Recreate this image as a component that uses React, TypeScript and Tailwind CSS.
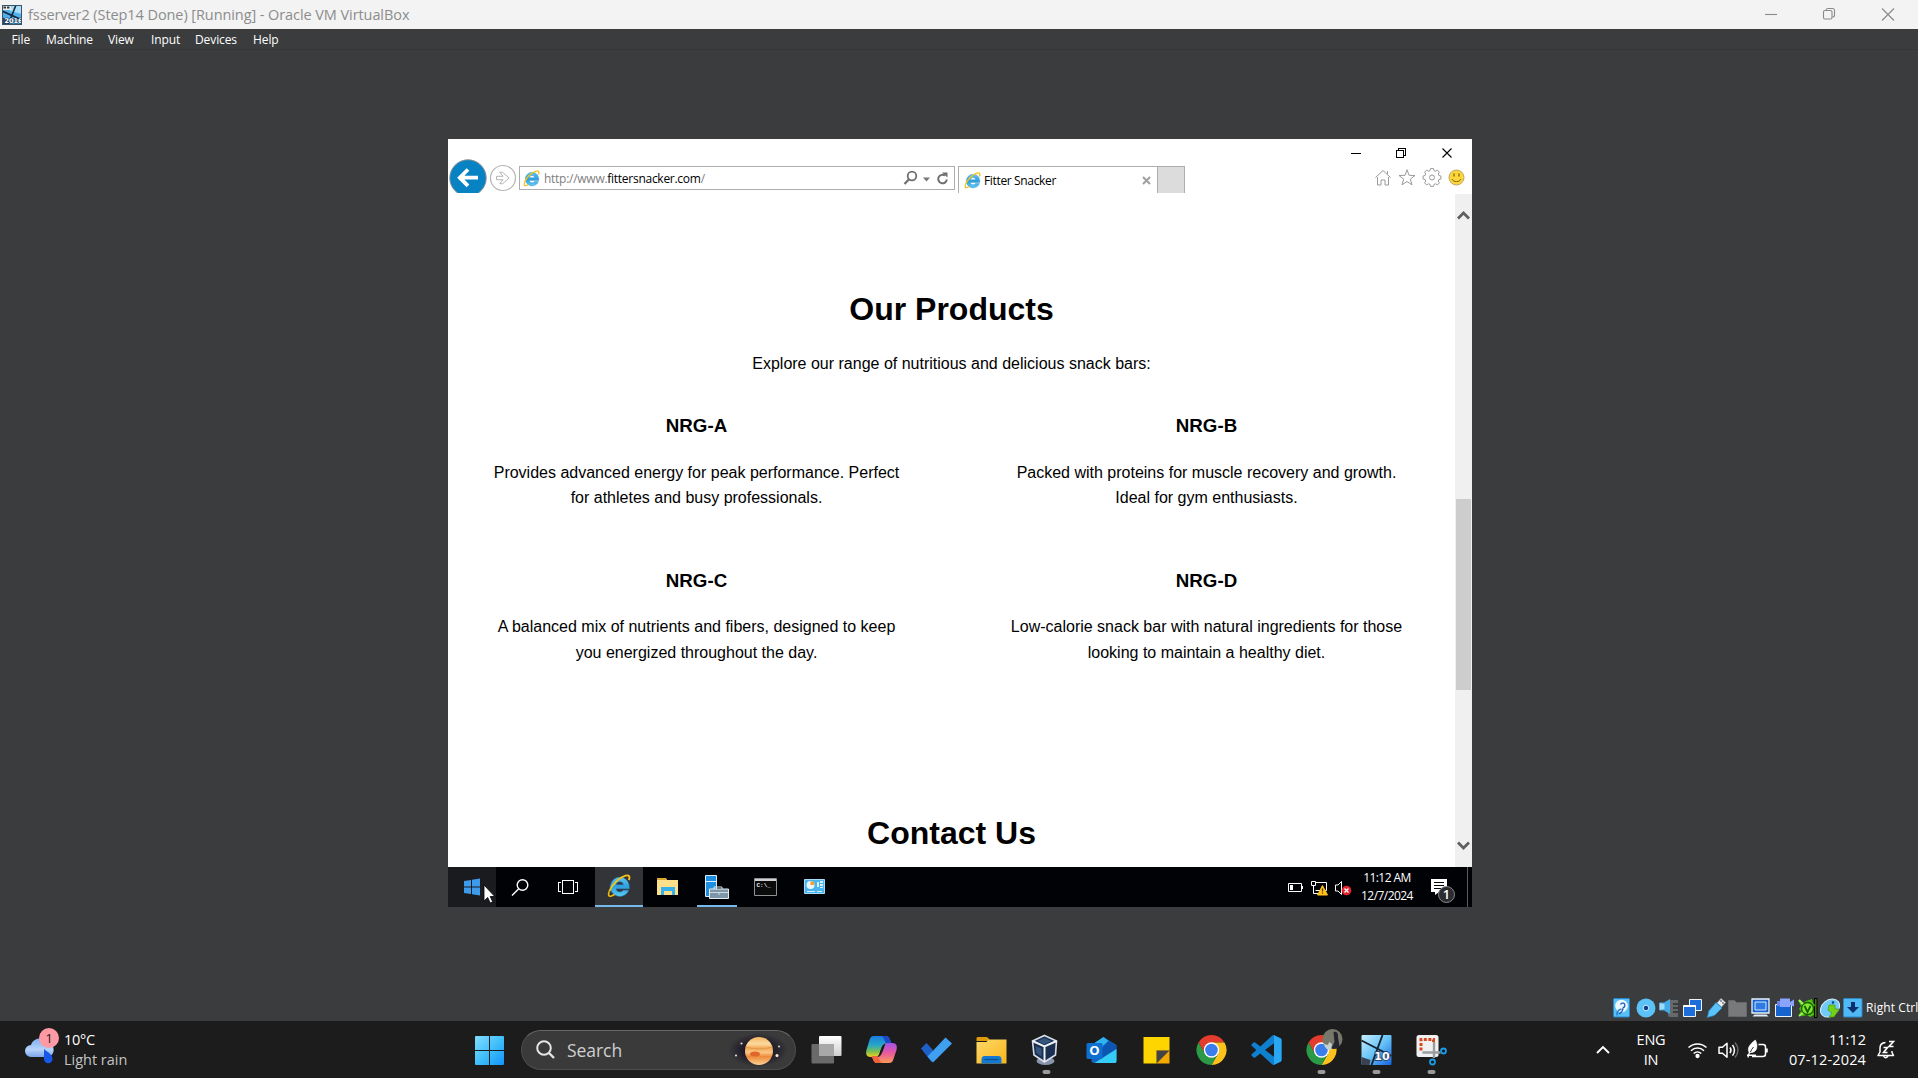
import React from "react";

const UI = "font-['Open_Sans','Noto_Sans',sans-serif]";

function IeLogo({ size }: { size: number }) {
  return (
    <svg width={size} height={size} viewBox="0 0 24 24" fill="none" className="shrink-0">
      <defs>
        <linearGradient id="ieBlue" x1="0" y1="0" x2="0" y2="1">
          <stop offset="0" stopColor="#5fc4f0" />
          <stop offset="0.5" stopColor="#2f9fe0" />
          <stop offset="1" stopColor="#5ccbf5" />
        </linearGradient>
      </defs>
      <path
        d="M12.8 3.2a9.600 9.600 0 1 0 9 13h-5.600c-.8 1.200-1.900 1.700-3.300 1.700-2.200 0-3.700-1.200-3.900-3.200h13.300c.6-6.300-3.200-11.500-9.500-11.500zM9 10.800c.4-1.900 1.800-3 3.800-3s3.400 1.100 3.600 3z"
        fill="url(#ieBlue)"
        stroke="#2583c4"
        strokeWidth="0.5"
        fillRule="evenodd"
      />
      <path d="M2.200 17.500C4.500 11 12 3.500 18.500 1.600c3.800-1 4.700 1 3.300 4.600" stroke="#f5c21a" strokeWidth="1.900" />
      <path d="M2.200 17.500C.8 21 1.600 23 4.400 22c1-.4 2.200-1 3.200-1.700" stroke="#f0b90c" strokeWidth="1.600" />
    </svg>
  );
}

function BrowserChrome() {
  return (
    <div className={`flex h-[54px] w-full bg-white ${UI}`}>
      <div className="mt-[20px] flex h-[34px] w-[507px] shrink-0 overflow-hidden">
        <svg width="71" height="34" viewBox="0 0 71 34" fill="none" className="shrink-0">
          <circle cx="20" cy="19" r="18.200" fill="#0783c4" stroke="#8a8f93" strokeWidth="1" />
          <path d="M30 18.700H12M20 10.500l-8.200 8.200 8.200 8.200" stroke="#fff" strokeWidth="3.800" />
          <circle cx="55" cy="19" r="12.500" stroke="#b4b4b4" strokeWidth="1.200" />
          <path d="M48.500 17.300h6.500l-3.200-4h2.800l6.500 5.700-6.500 5.700h-2.800l3.200-4h-6.500z" stroke="#b4b4b4" />
        </svg>
        <div className="mt-[7px] flex h-[24px] w-[436px] shrink-0 items-center border border-[#adadad] pl-[3px]">
          <IeLogo size={17} />
          <span className="mt-[2px] ml-[4px] w-[359px] shrink-0 text-[12px] leading-none tracking-[-0.27px] whitespace-nowrap text-[#808080]">
            http://www.<span className="text-black">fittersnacker.com</span>/
          </span>
          <svg width="48" height="22" viewBox="0 0 48 22" fill="none" className="shrink-0">
            <circle cx="9" cy="9" r="4.300" stroke="#6f6f6f" strokeWidth="1.800" />
            <path d="M6 12.300 1.500 17" stroke="#6f6f6f" strokeWidth="2.200" />
            <path d="M20 10.500h7l-3.500 4z" fill="#777" />
            <path d="M42 8.500A4.300 4.300 0 1 0 43.800 12.500" stroke="#6f6f6f" strokeWidth="2" />
            <path d="M39 5.500h5.500v5z" fill="#6f6f6f" />
          </svg>
        </div>
      </div>
      <div className="mt-[27px] ml-[3px] flex h-[27px] w-[200px] shrink-0 items-center border border-b-0 border-[#adadad] bg-white pl-[5px]">
        <IeLogo size={17} />
        <span className="mt-[2px] ml-[3px] w-[158px] shrink-0 text-[12px] leading-none tracking-[-0.35px] whitespace-nowrap text-black">Fitter Snacker</span>
        <svg width="9" height="9" viewBox="0 0 9 9" className="shrink-0">
          <path d="M1 1l7 7M8 1L1 8" stroke="#a0a0a0" strokeWidth="2" />
        </svg>
      </div>
      <div className="mt-[27px] h-[27px] w-[27px] shrink-0 border-t border-r border-[#adadad] bg-[#dcdcdc]" />
      <div className="ml-auto flex w-[130px] flex-col">
        <svg width="130" height="27" viewBox="0 0 130 27" fill="none" stroke="#000" shapeRendering="crispEdges">
          <path d="M9 14.500h10" />
          <path d="M54.500 11.500h7v7h-7zM56.500 11v-1.500h7v7h-2" />
          <path d="M100.500 9.500l9 9M109.500 9.500l-9 9" shapeRendering="auto" strokeWidth="1.100" />
        </svg>
        <svg width="130" height="27" viewBox="0 0 130 27" fill="none" stroke="#9a9a9a">
          <path d="M33.500 11.500 41 4.500l7.500 7M35.500 11v8h3.500v-5h4v5h3.500v-8M45.500 5v3" />
          <path d="M65 3.700l2 5.600 6 .2-4.700 3.600 1.700 5.700-5-3.300-5 3.300 1.700-5.700L57 9.500l6-.2z" />
          <path d="M91.500 3h3l.5 2 1.500.6 1.900-1.100 2 2-1.100 1.900.6 1.500 2 .5v3l-2 .5-.6 1.500 1.100 1.900-2 2-1.900-1.100-1.500.6-.5 2h-3l-.5-2-1.500-.6-1.900 1.100-2-2 1.100-1.900-.6-1.500-2-.5v-3l2-.5.6-1.500-1.100-1.900 2-2 1.900 1.100 1.500-.6z" transform="translate(-3 -.4)" />
          <circle cx="90" cy="11.500" r="2.500" />
          <circle cx="114.500" cy="11.500" r="7.500" fill="#ffd63a" stroke="#b9a468" />
          <path d="M112 7.500v3M117 7.500v3" stroke="#7a6414" strokeWidth="1.300" />
          <path d="M110 13c1.500 3.500 7.500 3.500 9 0" stroke="#7a6414" />
        </svg>
      </div>
    </div>
  );
}

function Product({ name, lines }: { name: string; lines: [string, string] }) {
  return (
    <article className="h-[154.6px] text-center whitespace-nowrap">
      <h3 className="text-[18.72px] leading-[30px] font-bold">{name}</h3>
      <p className="mt-[18.5px] text-[16px] leading-[25.6px]">
        {lines[0]}
        <br />
        {lines[1]}
      </p>
    </article>
  );
}

function WebPage() {
  return (
    <div className="flex h-[674px] w-full bg-white">
      <main className="flex w-[1007px] flex-col items-center overflow-hidden font-['Liberation_Sans',Arial,sans-serif] text-black">
        <h1 className="mt-[91px] text-[32px] leading-[51px] font-bold">Our Products</h1>
        <p className="mt-[16px] text-[16px] leading-[26px]">Explore our range of nutritious and delicious snack bars:</p>
        <section className="mt-[34px] grid grid-cols-[450px_450px] gap-x-[60px]">
          <Product name="NRG-A" lines={["Provides advanced energy for peak performance. Perfect", "for athletes and busy professionals."]} />
          <Product name="NRG-B" lines={["Packed with proteins for muscle recovery and growth.", "Ideal for gym enthusiasts."]} />
          <Product name="NRG-C" lines={["A balanced mix of nutrients and fibers, designed to keep", "you energized throughout the day."]} />
          <Product name="NRG-D" lines={["Low-calorie snack bar with natural ingredients for those", "looking to maintain a healthy diet."]} />
        </section>
        <h1 className="mt-[88px] text-[32px] leading-[51px] font-bold">Contact Us</h1>
      </main>
      <div className="mt-px flex w-[17px] flex-col items-center bg-[#f0f0f0]">
        <svg width="17" height="305" viewBox="0 0 17 305" fill="none" className="shrink-0">
          <path d="M3 24.500 8.500 19l5.500 5.500" stroke="#606060" strokeWidth="2.800" />
        </svg>
        <div className="h-[191px] w-[15px] shrink-0 bg-[#cdcdcd]" />
        <svg width="17" height="177" viewBox="0 0 17 177" fill="none" className="shrink-0">
          <path d="M3 152.500 8.500 158l5.500-5.500" stroke="#606060" strokeWidth="2.800" />
        </svg>
      </div>
    </div>
  );
}

function GuestTaskbar() {
  return (
    <div className={`flex h-[40px] w-full bg-[#010206] text-white ${UI}`}>
      <div className="relative h-[40px] w-[48px] bg-[#1a1b1f]">
        <svg width="48" height="40" viewBox="0 0 48 40" className="relative z-10 overflow-visible">
          <path d="M16 14l7-1v6.500h-7zM24 12.800l8-1.200v7.900h-8zM16 20.500h7V27l-7-1zM24 20.500h8v7.900l-8-1.200z" fill="#3d9be9" />
          <path d="M36 18v16l3.700-3.500 2.500 5.500 2.500-1.200-2.500-5.300h4.600z" fill="#fff" stroke="#000" strokeWidth=".8" />
        </svg>
      </div>
      <svg width="48" height="40" viewBox="0 0 48 40" fill="none" stroke="#fff" strokeWidth="1.400">
        <circle cx="26.500" cy="18" r="5.300" />
        <path d="M22.500 22 16 28.500" />
      </svg>
      <svg width="48" height="40" viewBox="0 0 48 40" fill="none" stroke="#fff" shapeRendering="crispEdges">
        <path d="M18.500 13.500h11v13h-11zM17 15.500h-2.500v9H17M31 15.500h2.500v9H31" />
      </svg>
      <div className="ml-[3px] flex h-[40px] w-[48px] items-start justify-center border-b-2 border-[#76b9ed] bg-[#333437] pt-[7px]">
        <IeLogo size={24} />
      </div>
      <svg width="49" height="40" viewBox="0 0 49 40">
        <path d="M14 11h9l1 2h11v15H14z" fill="#ffe08a" />
        <path d="M14 11h9v2h-9z" fill="#d9a82c" />
        <path d="M18 28v-8h14v8h-3v-4h-8v4z" fill="#35b0ea" />
      </svg>
      <div className="ml-[5px] flex h-[40px] w-[40px] items-start justify-center border-b-2 border-[#76b9ed] pt-[8px]">
        <svg width="24" height="24" viewBox="0 0 24 24">
          <path d="M.5.500h11v21H.5z" fill="#1e8fe0" stroke="#d8ecfa" />
          <path d="M1 6.500h10" stroke="#d8ecfa" />
          <path d="M9 14V12h8v2" fill="none" stroke="#dfe6ea" />
          <path d="M4.500 14h19v9.500h-19z" fill="#7d96a8" stroke="#e6ecf0" />
          <path d="M5 17.500h18M14 17v3" stroke="#cfdbe3" />
        </svg>
      </div>
      <svg width="49" height="40" viewBox="0 0 49 40" className="ml-[4px]">
        <path d="M13.500 11.500h22v17h-22z" fill="#0b0b0b" stroke="#8e9296" />
        <path d="M14 12h21v2H14z" fill="#cfd2d4" />
        <text x="15.500" y="20" fontSize="6" fontWeight="bold" fill="#e8e8e8" fontFamily="Liberation Mono">C:\_</text>
      </svg>
      <svg width="49" height="40" viewBox="0 0 49 40">
        <path d="M14.500 12.500h20v14h-20z" fill="#49b4ee" stroke="#a5dcf9" />
        <circle cx="20.500" cy="18" r="4" fill="#e9f6fd" />
        <path d="M20.500 18v-4a4 4 0 0 1 4 4z" fill="#f0a030" />
        <path d="M27 15h2v5h-2zM30 14h3v2h-3zM30 17h3v2h-3zM30 20h3v1h-3z" fill="#d7effc" />
        <path d="M17 24.500h8M27 24.500h5" stroke="#d7effc" />
      </svg>
      <div className="ml-auto flex h-[40px] items-center">
        <svg width="66" height="40" viewBox="0 0 66 40" fill="none" stroke="#fff">
          <path d="M.5 16.500h13v8H.5zM14.500 19v3" strokeWidth="1" />
          <path d="M2 18h3v5H2z" fill="#fff" stroke="none" />
          <path d="M28 15.500h10.500v8H27.500M23.500 14.500h4v4h-4zM25.500 18.500v8h5M31 26.500h4" />
          <path d="M34.500 18.500 39.500 28h-10z" fill="#ffc219" stroke="#ffc219" />
          <path d="M34.500 21.500v3M34.500 25.500v1.200" stroke="#5a3c00" strokeWidth="1.300" />
          <path d="M47.500 18v6h2.500l3.500 3.500v-13L50 18z" />
          <circle cx="58.500" cy="23.500" r="4.800" fill="#e2232e" stroke="none" />
          <path d="M56.500 21.500l4 4M60.500 21.500l-4 4" strokeWidth="1.300" />
        </svg>
        <div className="mr-[16px] ml-[5px] w-[56px] text-center text-[12px] leading-[18px] tracking-[-0.55px] whitespace-nowrap">
          <div>11:12 AM</div>
          <div>12/7/2024</div>
        </div>
        <svg width="26" height="40" viewBox="0 0 26 40">
          <path d="M0 12h16v13H8l-4 3v-3H0z" fill="#fff" />
          <path d="M3 15.500h10M3 18.500h10M3 21.500h7" stroke="#010206" strokeWidth="1.200" />
          <circle cx="15.500" cy="27.500" r="8" fill="#2b2c30" stroke="#85878b" />
          <text x="15.500" y="32" fontSize="13" textAnchor="middle" fill="#fff" fontFamily="Open Sans" fontWeight="600">1</text>
        </svg>
        <div className="mr-[4px] ml-[10px] h-[40px] w-px bg-[#5b5c5f]" />
      </div>
    </div>
  );
}

function StatusIcons() {
  const cell = "h-[20px] w-[23px] shrink-0 overflow-visible";
  return (
    <div className="flex h-[20px] items-center">
      <svg className={cell} viewBox="0 0 23 20">
        <rect x="1.500" y="0.500" width="16" height="18.500" rx="1" fill="#56c0f7" stroke="#2b86c8" />
        <circle cx="9.500" cy="8" r="6.300" fill="#eaf7ff" />
        <path d="M5 17.500c-.5-3.500 1-5.500 4.500-6.500" fill="none" stroke="#2a7fc8" strokeWidth="1.500" />
        <path d="M8.500 6.500a2.300 2.300 0 1 1 2.200 3.200M11 10c0 2-1.500 4.500-4 6" fill="none" stroke="#1b5bb5" strokeWidth="1.300" />
      </svg>
      <svg className={cell} viewBox="0 0 23 20">
        <circle cx="11" cy="10" r="9.500" fill="#5cc3f8" />
        <circle cx="11" cy="10" r="2.800" fill="#123f8c" stroke="#c9edff" />
      </svg>
      <svg className={cell} viewBox="0 0 23 20">
        <path d="M10 3q0-1 1-1h9v3h-5v2h5v2h-5v2h5v2h-5v2h5v4h-8q-2 0-2-2z" fill="#66696c" />
        <path d="M1.500 4.500h4.500l6-3.500v15l-6-3.500H1.500z" fill="#45a9e8" />
        <path d="M1.500 5l5 1v5l-5 1z" fill="#9cdcfb" />
      </svg>
      <svg className={cell} viewBox="0 0 23 20">
        <path d="M8.500 1.500h12v11h-12z" fill="#1c6edb" stroke="#eaf4fd" />
        <path d="M2.500 7.500h12v11h-12z" fill="#1c6edb" stroke="#eaf4fd" />
        <path d="M2.500 8h12" stroke="#fff" strokeWidth="2" />
      </svg>
      <svg className={cell} viewBox="0 0 23 20">
        <path d="M13 5l4-4.500 4.500 4L17.500 9z" fill="#e9eef2" stroke="#9ba6ad" strokeWidth=".7" />
        <path d="M16.500 2.500l1 1M18.500 4.500l1 1" stroke="#333" strokeWidth="1.200" />
        <path d="M12 4.500l6 5.500-7 7c-2 1.500-4 1-6 2l-2 .5 1-3c.5-2 0-3 2-5z" fill="#5cc3f8" stroke="#1e7fc4" strokeWidth=".7" />
      </svg>
      <svg className={cell} viewBox="0 0 23 20">
        <path d="M1.500 2.500h6l2 2h10v14h-18z" fill="#77797b" stroke="#66686a" />
      </svg>
      <svg className={cell} viewBox="0 0 23 20">
        <path d="M2 1h17v14H2z" fill="#1763cf" stroke="#eaf4fd" strokeWidth="1.300" />
        <path d="M5 4h11v8H5z" fill="#2e7be6" stroke="#d6eafc" />
        <path d="M4.500 16.500h12l2 2h-16z" fill="#dceefb" />
      </svg>
      <svg className={cell} viewBox="0 0 23 20">
        <path d="M2.500 6.500h16v12h-16z" fill="#1763cf" stroke="#eaf4fd" />
        <path d="M7 .5h10v8.500H7zM17 4l4-2.500v7L17 7z" fill="#8aa4ff" />
        <path d="M4 3h3v5H4z" fill="#6b86e8" />
      </svg>
      <svg className={cell} viewBox="0 0 23 20">
        <path d="M18.500 .5h2.500v19h-2.500z" fill="#3c7a10" stroke="#000" />
        <path d="M2 2l5 3 3-2 6-2 1 4 2 2-2 4 1 6-4 2-3-2-4 1-4-1 2-4-2-2 2-3z" fill="#4cc40c" />
        <circle cx="11.500" cy="10.500" r="6" fill="#7aea2a" stroke="#1c5a05" strokeWidth="1.400" />
        <path d="M8.500 8l3 6 3-6" fill="none" stroke="#1c5a05" strokeWidth="1.800" />
        <path d="M3 2l4 4M3 18l4-3" stroke="#9cf55a" strokeWidth="2" />
      </svg>
      <svg className={cell} viewBox="0 0 23 20">
        <ellipse cx="11" cy="10" rx="10.500" ry="8" fill="#6fcaf8" stroke="#d3effd" transform="rotate(-40 11 10)" />
        <circle cx="14" cy="4.500" r="1.300" fill="#103a80" />
        <path d="M10 7h6v4h4l-5 8h-5l3-4-4-3z" fill="#72d316" stroke="#3f8a08" strokeWidth=".6" />
      </svg>
      <svg className={cell} viewBox="0 0 23 20">
        <rect x="1.500" y="0.500" width="18.500" height="18.500" rx="1" fill="#4fb9f5" stroke="#2e86c5" />
        <path d="M9 4h4v5h4l-6 6-6-6h4z" fill="#0b2e6e" />
      </svg>
      <span className={`ml-px text-[12px] leading-none tracking-[0.1px] whitespace-nowrap text-white ${UI}`}>Right Ctrl</span>
    </div>
  );
}

function Slot({ children, running }: { children: React.ReactNode; running?: boolean }) {
  return (
    <svg width="55" height="57" viewBox="-27.5 -29 55 57" className="shrink-0">
      {children}
      {running && <rect x="-4" y="20" width="8" height="4" rx="2" fill="#9a9a9a" />}
    </svg>
  );
}

function ChromeMark() {
  return (
    <g>
      <path d="M-13-7.500A15 15 0 0 1 13-7.500H0L-6.500 3.750z" fill="#e33b2e" />
      <path d="M13-7.500A15 15 0 0 1 0 15L6.500 3.750 0-7.500z" fill="#fcc21b" />
      <path d="M0 15A15 15 0 0 1-13-7.500L-6.500 3.750 0 7.500 6.500 3.750z" fill="#2b9a46" />
      <circle r="7.700" fill="#fff" />
      <circle r="6.300" fill="#3b7ded" />
    </g>
  );
}

function HostApps() {
  return (
    <div className="ml-[3px] flex">
      <Slot>
        <defs>
          <linearGradient id="tv" x1="0" y1="0" x2="0" y2="1"><stop offset="0" stopColor="#fff" /><stop offset="1" stopColor="#cfcfcf" /></linearGradient>
          <linearGradient id="cpA" x1="0" y1="0" x2="0" y2="1"><stop offset="0" stopColor="#1b7be0" /><stop offset=".45" stopColor="#28a9c4" /><stop offset=".75" stopColor="#7fc04a" /><stop offset="1" stopColor="#f3d020" /></linearGradient>
          <linearGradient id="cpB" x1="0" y1="0" x2="0" y2="1"><stop offset="0" stopColor="#a352e8" /><stop offset=".5" stopColor="#ea5a9c" /><stop offset="1" stopColor="#fb9a5a" /></linearGradient>
          <linearGradient id="fold" x1="0" y1="0" x2="1" y2="1"><stop offset="0" stopColor="#ffd968" /><stop offset="1" stopColor="#f7b51c" /></linearGradient>
          <linearGradient id="w10" x1="0" y1="0" x2="1" y2="1"><stop offset="0" stopColor="#c9efff" /><stop offset=".5" stopColor="#66c3f7" /><stop offset="1" stopColor="#1763e0" /></linearGradient>
        </defs>
        <rect x="-7.500" y="-14" width="22.500" height="20" rx="1" fill="url(#tv)" />
        <rect x="-15" y="-6" width="22.500" height="19.500" rx="1" fill="#6a6a6a" />
        <path d="M-7.500-6H7.500V6h-15z" fill="#a8a8a8" />
      </Slot>
      <Slot>
        <path d="M-7-14H4c3 0 4 2 5 5l1 3H5c-3 0-4 1-5 4l-2 6c-1 2-2 3-4 3h-5c-4 0-5-3-4-7l3-10c1-3 2-4 4-4z" fill="url(#cpA)" />
        <path d="M-1-14h5c3 0 4 2 5 5l1 3H5c-2-1-2-8-6-8z" fill="#1d48c8" />
        <path d="M7 13H-4c-3 0-4-2-5-5l-1-1h5c3 0 4-1 5-4l2-6c1-2 2-4 4-4h5c4 0 5 3 4 7l-3 9c-1 3-2 4-5 4z" fill="url(#cpB)" />
        <path d="M1 13h-5c-3 0-4-2-5-5l-1-2h5c2 0 3 6 6 7z" fill="#f0643c" />
        <path d="M-3.500 6.500C-1.500 5-.5-6 4-6.500 2.500-4 1.500 5.500-3.500 6.500z" fill="#1c1c1c" />
      </Slot>
      <Slot>
        <path d="M-15.500-1.500-10-7l6 6.500 1 10.500L-5 12z" fill="#1f5fc8" />
        <path d="M-9 6.500 9-12.500l6.500 6L-3.500 12.500z" fill="#3f9ff0" />
      </Slot>
      <Slot>
        <path d="M-15-11.500c0-1 .5-1.500 1.500-1.500h8c1 0 2 .5 3 2l1 2h-13.500z" fill="#dc9a0c" />
        <path d="M-15-8h10l2-2.500h18V13.500h-30z" fill="url(#fold)" />
        <path d="M-10 13.500v-4c0-2 1-3.500 3-3.500H7c2 0 3 1.500 3 3.500v4z" fill="#1578d0" />
        <path d="M-7 9.500H7" stroke="#0c4f93" strokeWidth="1.300" />
      </Slot>
      <Slot running>
        <ellipse cx="-1" cy="11" rx="9" ry="4" fill="#8794ac" />
        <path d="M-2-14.500 10-9 9 5-2 12-12.500 5-14-9z" fill="#1b3050" stroke="#d8dee8" strokeWidth="1.600" />
        <path d="M-14-9-2-3.500 10-9M-2-3.500V12" fill="none" stroke="#eef2f7" strokeWidth="2" />
        <path d="M-2-12 5-9l-7 3.500L-9-9z" fill="#33547c" />
        <path d="M-11-4l6 2.500v8L-10 3z" fill="#35557f" />
      </Slot>
      <Slot>
        <path d="M-10-5 2-13 15-5v16c0 1.500-1 2-2 2H-7c-2 0-3-1-3-2z" fill="#1566c2" />
        <path d="M-10-5 2-13l5 4L-7 3z" fill="#2fb2ee" />
        <path d="M7-9l8 5v5L2 8l-6-4z" fill="#0c55b0" />
        <path d="M15-1v12c0 1.500-1 2-2 2H-7z" fill="#35cdf8" />
        <rect x="-15" y="-7" width="16" height="16" rx="1.500" fill="#0f6fd0" />
        <text x="-7" y="5" fontSize="13" fontWeight="bold" textAnchor="middle" fill="#fff" fontFamily="Open Sans">O</text>
      </Slot>
      <Slot>
        <path d="M-13-13h26V0L0 13.500h-13z" fill="#ffd500" />
        <path d="M0 0h13v13.500H0z" fill="#f4a900" />
        <path d="M0 .5h13L0 13.500z" fill="#444" />
      </Slot>
      <Slot><ChromeMark /></Slot>
      <Slot>
        <g transform="translate(-15 -15) scale(1.25)">
          <path d="M23.150 2.587L18.210.210a1.494 1.494 0 0 0-1.705.290l-9.460 8.630-4.120-3.128a.999.999 0 0 0-1.276.057L.327 7.261A1 1 0 0 0 .326 8.740L3.899 12 .326 15.260a1 1 0 0 0 .001 1.479L1.650 17.940a.999.999 0 0 0 1.276.057l4.120-3.128 9.460 8.630a1.492 1.492 0 0 0 1.704.290l4.942-2.377A1.500 1.500 0 0 0 24 20.060V3.939a1.500 1.500 0 0 0-.850-1.352zm-5.146 14.861L10.826 12l7.178-5.448v10.896z" fill="#0f7fd0" />
          <path d="M18 .2l5.150 2.387A1.500 1.500 0 0 1 24 3.940v16.120a1.500 1.500 0 0 1-.85 1.350L18 23.800z" fill="#2aa7f2" />
        </g>
      </Slot>
      <Slot running>
        <ChromeMark />
        <circle cx="11" cy="-11" r="10" fill="#77786c" />
        <path d="M12-18c3-1 5 1 4.500 5l1.500 9c-2 3-6 4-8 2l3-6z" fill="#23242e" />
        <path d="M2.500-6l4 1 1-3 3 2-1 6c-4 0-6-2-7-6z" fill="#c5d0cc" />
      </Slot>
      <Slot running>
        <rect x="-15" y="-15" width="30" height="30" rx="1" fill="url(#w10)" />
        <path d="M-15-9.500 15 6M6-15-5 15" fill="none" stroke="#16222f" strokeWidth="1.900" />
        <path d="M-15 7l9 3-1 5h-8z" fill="#3a4150" />
        <text x="5.500" y="9.500" fontSize="11" fontWeight="bold" textAnchor="middle" fill="#fff" stroke="#274465" strokeWidth="1.800" paintOrder="stroke" fontFamily="DejaVu Sans">10</text>
      </Slot>
      <Slot running>
        <rect x="-15" y="-15" width="22" height="22" rx="2.500" fill="#f1f1f1" />
        <path d="M-10.500.500v-11H2v3" fill="none" stroke="#d9481c" strokeWidth="3" strokeDasharray="3 1.600" />
        <path d="M2.500-8V8M-9 2.500H9" stroke="#9a9da0" strokeWidth="2.400" />
        <circle cx="12" cy="1" r="2.500" fill="none" stroke="#1c9ae6" strokeWidth="1.800" />
        <circle cx="1" cy="12" r="2.500" fill="none" stroke="#1c9ae6" strokeWidth="1.800" />
      </Slot>
    </div>
  );
}

function HostTaskbar() {
  return (
    <div className={`flex h-[57px] w-full items-center overflow-hidden bg-[#1c1c1c] text-white ${UI}`}>
      <div className="flex w-[475px] shrink-0 items-center">
        <svg width="64" height="57" viewBox="0 0 64 57" className="shrink-0">
          <defs>
            <linearGradient id="cl" x1="0" y1="0" x2="0" y2="1"><stop offset="0" stopColor="#7fb0ee" /><stop offset=".6" stopColor="#b6d3fa" /><stop offset="1" stopColor="#7ba6ea" /></linearGradient>
          </defs>
          <path d="M31 36a6 6 0 0 1 0-12 9 9 0 0 1 15-4 8.500 8.500 0 0 1 3 16z" fill="url(#cl)" />
          <path d="M44 28c5 4 8.500 6 8.500 10a4.200 4.200 0 0 1-8.500 0z" fill="#1758e8" />
          <circle cx="49" cy="17" r="10" fill="#ff99a4" />
          <text x="49" y="22" fontSize="13.500" textAnchor="middle" fill="#222" fontFamily="Open Sans">1</text>
        </svg>
        <div className="text-[14.5px] leading-[20px] tracking-[-0.3px]">
          <div>10°C</div>
          <div className="tracking-[-0.02px] text-[#c4c4c4]">Light rain</div>
        </div>
      </div>
      <svg width="29" height="29" viewBox="0 0 29 29" className="mt-px shrink-0">
        <defs>
          <linearGradient id="win" x1="0" y1="0" x2="1" y2="1"><stop offset="0" stopColor="#83dcff" /><stop offset=".5" stopColor="#42c0fb" /><stop offset="1" stopColor="#0f93fb" /></linearGradient>
        </defs>
        <path d="M0 1q0-1 1-1h13v14H0zM15 0h13q1 0 1 1v13H15zM0 15h14v14H1q-1 0-1-1zM15 15h14v13q0 1-1 1H15z" fill="url(#win)" />
      </svg>
      <div className="ml-[17px] flex h-[40px] w-[275px] shrink-0 items-center rounded-full border border-[#4d4d4d] border-t-[#686868] bg-[#3a3a3a] pl-[14px]">
        <svg width="19" height="19" viewBox="0 0 19 19" fill="none" stroke="#e4e4e4" strokeWidth="2" className="shrink-0">
          <circle cx="8" cy="8" r="6.800" />
          <path d="M13 13l5 5" strokeWidth="2.400" />
        </svg>
        <span className="mt-[2px] ml-[12px] w-[160px] text-[17.5px] leading-none tracking-[-0.05px] text-[#cfcfcf]">Search</span>
        <svg width="62" height="36" viewBox="0 0 62 36" className="shrink-0">
          <defs>
            <radialGradient id="glow"><stop offset=".4" stopColor="#1a1426" /><stop offset="1" stopColor="#3a3a3a" /></radialGradient>
            <linearGradient id="jup" x1="0" y1="0" x2="0" y2="1"><stop offset="0" stopColor="#f6b55f" /><stop offset=".25" stopColor="#fbd9a0" /><stop offset=".4" stopColor="#f3a855" /><stop offset=".55" stopColor="#fbc784" /><stop offset=".7" stopColor="#ee8a3a" /><stop offset="1" stopColor="#fbd093" /></linearGradient>
          </defs>
          <ellipse cx="31" cy="18" rx="30" ry="17" fill="url(#glow)" />
          <circle cx="32" cy="19" r="14" fill="url(#jup)" />
          <path d="M19 15q13 4 26 0" stroke="#e29749" fill="none" />
          <ellipse cx="28" cy="22" rx="5" ry="2.500" fill="#e0662c" />
          <circle cx="14.500" cy="11.500" r="1.100" fill="#e9d9c8" />
          <circle cx="9" cy="23.500" r="1.100" fill="#e9d9c8" />
          <circle cx="52" cy="14.500" r="1" fill="#e9d9c8" />
          <circle cx="50" cy="23.500" r="1.500" fill="#fff0d8" />
        </svg>
      </div>
      <HostApps />
      <div className="ml-auto flex items-center">
        <svg width="16" height="10" viewBox="0 0 16 10" fill="none" className="mr-[25px]">
          <path d="M2 8l6-6 6 6" stroke="#fff" strokeWidth="1.900" />
        </svg>
        <div className="w-[30px] text-center text-[14.5px] leading-[20px] tracking-[-0.2px]">
          <div>ENG</div>
          <div>IN</div>
        </div>
        <svg width="82" height="24" viewBox="0 0 82 24" fill="none" stroke="#fff" strokeWidth="1.500" className="ml-[21px]">
          <path d="M1.500 9.500a13 13 0 0 1 18 0M4 12.700a9.300 9.300 0 0 1 13 0M6.700 15.500a5.600 5.600 0 0 1 7.600 0" />
          <circle cx="10.500" cy="18" r="1.400" fill="#fff" />
          <path d="M32 9.300h3.500l4.500-4v14l-4.500-4H32z" strokeLinejoin="round" />
          <path d="M43 9.500q2 2.800 0 5.600M45.500 7q4 5.300 0 10.600" />
          <path d="M48 4.500q6 7.500 0 15" stroke="#666" />
          <path d="M71.500 6.500H76q2.500 0 2.500 2.500v7q0 2.500-2.500 2.500H65M80 10.500v4" />
          <path d="M62.300 14.500c-2.800-4 .7-8.500 6-12.500 3 5 2 12-3.500 12.500z" fill="#fff" strokeWidth=".6" />
          <path d="M61 19.500q.5-5 5-10" strokeWidth="1.300" />
          <path d="M63.500 14q.8-2.500 3-5" stroke="#1c1c1c" strokeWidth=".9" />
          <path d="M60 16.500h9v1.500h-9z" fill="#fff" stroke="none" />
        </svg>
        <div className="ml-[15px] w-[82px] text-right text-[14.5px] leading-[20px] whitespace-nowrap">
          <div>11:12</div>
          <div className="tracking-[0.14px]">07-12-2024</div>
        </div>
        <svg width="20" height="22" viewBox="0 0 20 22" fill="none" stroke="#fff" strokeWidth="1.500" className="mr-[22px] ml-[10px]">
          <path d="M9.500 3.500Q4 4 4 9v4l-2 3.500h15.500l-1.500-3V12M7.500 17q2 3.500 4.500 0" strokeLinejoin="round" />
          <path d="M7.500 8.500h4l-4 5h4M13 2.500h4.500l-4.500 5h4.500" strokeWidth="1.600" />
        </svg>
      </div>
    </div>
  );
}

const MENU: [string, string][] = [
  ["File", "w-[34.5px]"],
  ["Machine", "w-[62px]"],
  ["View", "w-[43px]"],
  ["Input", "w-[44px]"],
  ["Devices", "w-[58px]"],
  ["Help", "w-[40px]"],
];

export default function App() {
  return (
    <div className="flex h-[1078px] w-[1918px] flex-col overflow-hidden bg-[#3b3c3e]">
      <header className={`flex h-[29px] shrink-0 items-center bg-[#f3f3f3] pl-[2px] ${UI}`}>
        <svg width="20" height="20" viewBox="0 0 20 20" className="shrink-0">
          <rect width="20" height="20" fill="#4fb2ec" />
          <path d="M10 0h10v9L8 6z" fill="#a9def9" />
          <path d="M0 6l20 9M14 0 6 20" stroke="#14293c" strokeWidth="1.600" />
          <path d="M0 0h9v5H0z" fill="#eee" />
          <path d="M1.500 2.500h6" stroke="#333" strokeWidth="2" strokeDasharray="2.500 1" />
          <path d="M0 12l6 3v5H0z" fill="#39424e" />
          <text x="11.500" y="17.500" fontSize="6.500" fontWeight="bold" textAnchor="middle" fill="#fff" stroke="#1c3b5a" strokeWidth="1.200" paintOrder="stroke" fontFamily="DejaVu Sans">2016</text>
          <rect x=".5" y=".5" width="19" height="19" fill="none" stroke="#37546b" />
        </svg>
        <span className="mt-[2px] ml-[6px] text-[14.5px] leading-none tracking-[-0.08px] whitespace-nowrap text-[#8c8c8c]">
          fsserver2 (Step14 Done) [Running] - Oracle VM VirtualBox
        </span>
        <svg width="150" height="29" viewBox="0 0 150 29" fill="none" stroke="#8a8a8a" strokeWidth="1.100" className="ml-auto shrink-0 overflow-visible">
          <path d="M-3 14.500h12" />
          <rect x="55.500" y="10.500" width="8.500" height="8.500" rx="1.500" />
          <path d="M58 10.500q0-2 2-2h4.500q2 0 2 2V15q0 2-2 2" />
          <path d="M114 8.500l12 12M126 8.500l-12 12" />
        </svg>
      </header>
      <nav className={`flex h-[21px] shrink-0 items-center border-b border-[#353638] pt-[2px] pl-[11.5px] text-[12px] leading-none text-white ${UI}`}>
        {MENU.map(([label, width]) => (
          <span key={label} className={`${width} tracking-[-0.1px]`}>{label}</span>
        ))}
      </nav>
      <div className="mt-[89px] ml-[448px] flex h-[768px] w-[1024px] shrink-0 flex-col">
        <BrowserChrome />
        <WebPage />
        <GuestTaskbar />
      </div>
      <div className="mt-[91px] ml-[1612px] h-[20px] shrink-0">
        <StatusIcons />
      </div>
      <div className="mt-[3px] shrink-0">
        <HostTaskbar />
      </div>
    </div>
  );
}
